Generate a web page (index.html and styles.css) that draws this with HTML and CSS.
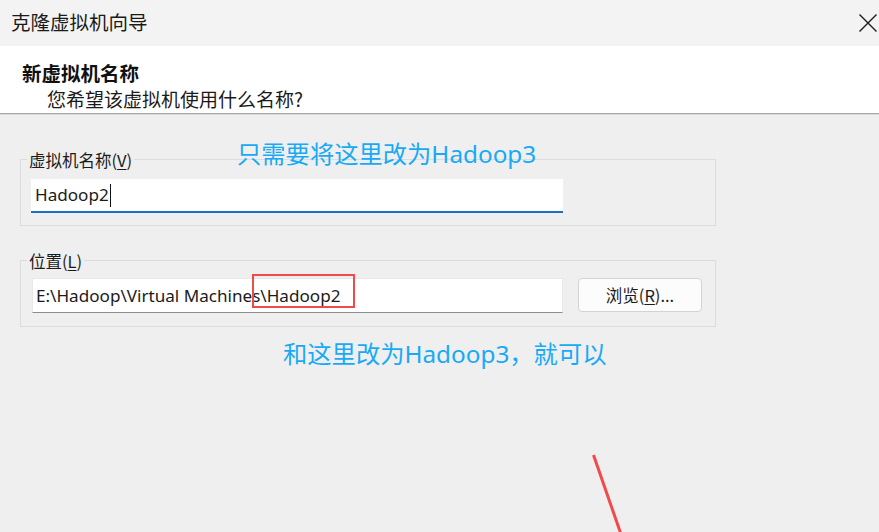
FILE: index.html
```html
<!DOCTYPE html>
<html lang="zh-CN">
<head>
<meta charset="utf-8">
<title>克隆虚拟机向导</title>
<link rel="stylesheet" href="styles.css">
</head>
<body>
<div class="window">
  <div class="titlebar">
    <span class="title">克隆虚拟机向导</span>
    <svg class="close" width="20" height="20" viewBox="0 0 20 20"><path d="M1.5 1.5 L18.5 18.5 M18.5 1.5 L1.5 18.5" stroke="#1c1c1c" stroke-width="1.4" fill="none"/></svg>
  </div>
  <div class="header">
    <div class="h-title">新虚拟机名称</div>
    <div class="h-sub">您希望该虚拟机使用什么名称?</div>
  </div>
  <div class="content">
    <div class="group g1">
      <div class="glabel">虚拟机名称(<u>V</u>)</div>
      <div class="input focused"><span>Hadoop2</span><span class="caret"></span></div>
    </div>
    <div class="group g2">
      <div class="glabel">位置(<u>L</u>)</div>
      <div class="row">
        <div class="input plain">E:\Hadoop\Virtual Machines\Hadoop2</div>
        <button class="btn">浏览(<u>R</u>)...</button>
      </div>
    </div>
  </div>

  <div class="note note1">只需要将这里改为Hadoop3</div>
  <div class="note note2">和这里改为Hadoop3，就可以</div>
  <div class="redbox"></div>
  <svg class="arrow" width="879" height="532" viewBox="0 0 879 532"><line x1="593.5" y1="455" x2="623" y2="540" stroke="#f24a4a" stroke-width="3"/></svg>
</div>
</body>
</html>
```
FILE: styles.css
```css
html, body {
  margin: 0;
  padding: 0;
}
body {
  width: 879px;
  height: 532px;
  overflow: hidden;
  background: #efefef;
  font-family: "Noto Sans CJK SC", "Noto Sans", sans-serif;
  color: #1b1b1b;
}
.window {
  position: relative;
  width: 879px;
  height: 532px;
}
.titlebar {
  height: 46px;
  background: #f3f3f3;
  display: flex;
  align-items: center;
  justify-content: space-between;
  padding: 0 1px 2px 11px;
  box-sizing: border-box;
}
.title {
  font-size: 19.5px;
  line-height: 26px;
  color: #1a1a1a;
}
.close {
  display: block;
  margin-top: 1px;
}
.header {
  background: #ffffff;
  height: 68px;
  box-sizing: border-box;
  padding: 14px 0 0 22px;
  border-bottom: 1px solid #a8a8a8;
  box-shadow: 0 1px 0 #dadada;
}
.h-title {
  font-size: 19.5px;
  font-weight: bold;
  line-height: 26px;
  color: #111;
}
.h-sub {
  font-size: 19px;
  line-height: 26px;
  padding-left: 25px;
  color: #1a1a1a;
}
.content {
  padding: 45px 0 0 20px;
}
.group {
  width: 696px;
  box-sizing: border-box;
  border: 1px solid #dcdcdc;
  padding: 0 10px 12px 10px;
}
.g2 {
  margin-top: 34px;
  padding-bottom: 13px;
}
.glabel {
  width: fit-content;
  margin: -11px 0 0 -4px;
  padding: 0 2px;
  background: #efefef;
  font-size: 16.5px;
  line-height: 22px;
  color: #1b1b1b;
}
.glabel u, .btn u {
  text-decoration-thickness: 1px;
  text-underline-offset: 2px;
}
.input {
  width: 532px;
  height: 34px;
  box-sizing: border-box;
  background: #fff;
  font-family: "Noto Sans", "Noto Sans CJK SC", sans-serif;
  font-size: 17.1px;
  line-height: 32px;
  padding-left: 4px;
  display: flex;
  align-items: center;
  color: #1b1b1b;
  white-space: nowrap;
}
.g1 .input {
  margin-top: 8px;
}
.focused {
  border-bottom: 2px solid #1a6fc4;
}
.caret {
  display: inline-block;
  width: 1px;
  height: 23px;
  background: #111;
  margin-left: 1px;
}
.row {
  display: flex;
  align-items: flex-start;
  gap: 15px;
  margin-top: 6px;
}
.plain {
  height: 35px;
  width: 531px;
  margin-left: 1px;
  border: 1px solid #e8e8e8;
  border-bottom: 1px solid #8d8d8d;
  padding-left: 3px;
}
.btn {
  width: 124px;
  height: 34px;
  box-sizing: border-box;
  border: 1px solid #d3d3d3;
  border-radius: 4px;
  background: #fcfcfc;
  font-family: "Noto Sans CJK SC", "Noto Sans", sans-serif;
  font-size: 16.5px;
  color: #1b1b1b;
  padding: 0;
}
.note {
  position: absolute;
  font-family: "Noto Sans", "Noto Sans CJK SC", sans-serif;
  font-size: 24.3px;
  line-height: 28px;
  color: #19aaf6;
  white-space: nowrap;
}
.note1 {
  left: 237px;
  top: 140px;
}
.note2 {
  left: 283px;
  top: 340px;
}
.redbox {
  position: absolute;
  left: 252px;
  top: 274px;
  width: 103px;
  height: 34px;
  box-sizing: border-box;
  border: 2px solid #f04a4a;
}
.arrow {
  position: absolute;
  left: 0;
  top: 0;
  pointer-events: none;
}
```
